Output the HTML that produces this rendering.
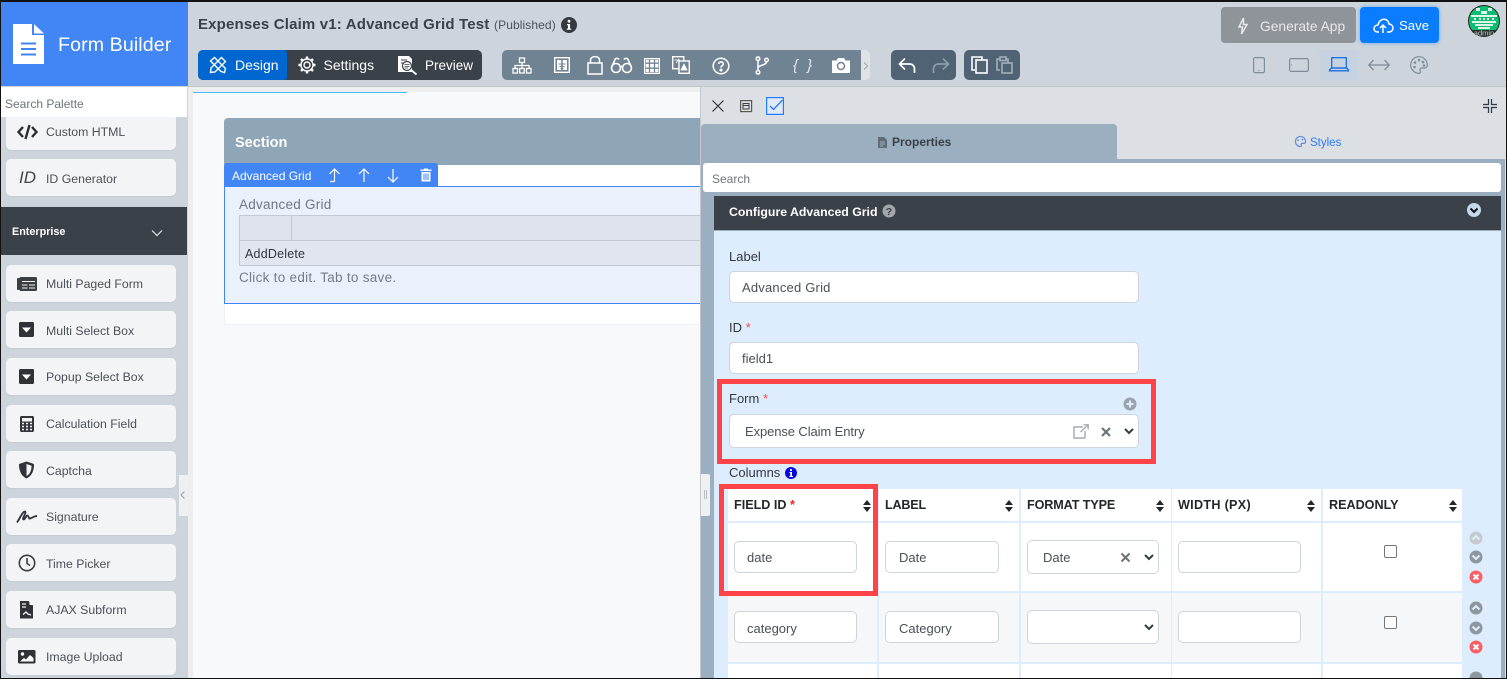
<!DOCTYPE html>
<html><head><meta charset="utf-8"><style>
html,body{margin:0;padding:0;width:1507px;height:679px;overflow:hidden;background:#fff}
body{position:relative;font-family:"Liberation Sans",sans-serif;color:#3a4149}
.b{position:absolute;box-sizing:border-box}
.t{position:absolute;white-space:nowrap;line-height:20px;height:20px}
svg{position:absolute;overflow:visible}
.item{position:absolute;left:6px;width:170px;height:37px;background:#f3f4f6;border-radius:5px;box-shadow:0 1px 1px #c4cad1}
.item span{position:absolute;left:40px;top:9px;font-size:12.3px;line-height:20px;color:#4b5158;white-space:nowrap}
.inp{position:absolute;box-sizing:border-box;background:#fff;border:1px solid #ced4da;border-radius:5px;height:32px;font-size:13px;line-height:32px;color:#495057;white-space:nowrap}
.th{position:absolute;top:495px;font-size:12.6px;font-weight:bold;line-height:20px;color:#23272b;white-space:nowrap}
.cb{position:absolute;width:13px;height:13px;box-sizing:border-box;border:1px solid #767676;border-radius:2px;background:#fff}
.red{position:absolute;box-sizing:border-box;border:5px solid #ff4449}
</style></head><body>

<!-- top bar -->
<div class="b" style="left:188px;top:0;width:1319px;height:87px;background:#cdd4db"></div>
<div class="b" style="left:188px;top:86px;width:1319px;height:1px;background:#c2c6ca"></div>
<!-- sidebar -->
<div class="b" style="left:0;top:0;width:188px;height:679px;background:#cdd4db"></div>
<div class="b" style="left:1px;top:2px;width:187px;height:84px;background:#4285f4"></div>
<svg style="left:13px;top:24px" width="31" height="40" viewBox="0 0 31 40"><path d="M0 0H19V11H31V40H0Z" fill="#fff"/><path d="M21 0L31 9.500H21Z" fill="#fff"/><path d="M8 19.500H23M8 25H23M8 30.500H23" stroke="#4285f4" stroke-width="2"/></svg>
<div class="t" style="left:58px;top:35px;font-size:19.600px;color:#fff;letter-spacing:.1px">Form Builder</div>

<div class="item" style="top:113px;height:37px"><span style="top:9px">Custom HTML</span></div>
<div class="b" style="left:1px;top:87px;width:186px;height:30px;background:#fff"></div>
<div class="t" style="left:5px;top:94px;font-size:12px;color:#6c757d">Search Palette</div>
<svg style="left:16px;top:123px" width="23" height="18" viewBox="0 0 23 18" fill="none" stroke="#2b2f33" stroke-width="2.400"><path d="M7 4L2.500 9L7 14M16 4L20.500 9L16 14M13.500 2L9.500 16"/></svg>
<div class="item" style="top:159px"><span style="top:10px">ID Generator</span></div>
<div class="t" style="left:19px;top:168px;font-size:17px;font-style:italic;color:#444">ID</div>
<div class="b" style="left:1px;top:207px;width:186px;height:48px;background:#3a4149"></div>
<div class="t" style="left:12px;top:222px;font-size:10.800px;font-weight:bold;color:#fff">Enterprise</div>
<svg style="left:151px;top:229px" width="12" height="8" viewBox="0 0 12 8" fill="none" stroke="#e6e6e6" stroke-width="1.200"><path d="M1 1.500L6 6.500L11 1.500"/></svg>

<div class="item" style="top:265px"><span>Multi Paged Form</span></div>
<svg style="left:17px;top:277px" width="20" height="14" viewBox="0 0 20 14"><rect x="0" y="1" width="3" height="12" rx="1" fill="#3a3f44"/><rect x="2.500" y="0" width="17.500" height="14" rx="1.500" fill="#3a3f44"/><path d="M5 4.500H18M5 8H10.500M12 8H18M5 11H10.500M12 11H18" stroke="#f3f4f6" stroke-width="1"/></svg>
<div class="item" style="top:311px"><span style="top:10px">Multi Select Box</span></div>
<svg style="left:19px;top:322px" width="15" height="15" viewBox="0 0 15 15"><rect width="15" height="15" rx="1.500" fill="#2f3338"/><path d="M3 5.500H12L7.500 10.500Z" fill="#fff"/></svg>
<div class="item" style="top:358px"><span>Popup Select Box</span></div>
<svg style="left:19px;top:369px" width="15" height="15" viewBox="0 0 15 15"><rect width="15" height="15" rx="1.500" fill="#2f3338"/><path d="M3 5.500H12L7.500 10.500Z" fill="#fff"/></svg>
<div class="item" style="top:405px"><span>Calculation Field</span></div>
<svg style="left:20px;top:416px" width="14" height="16" viewBox="0 0 14 16"><rect width="14" height="16" rx="1.500" fill="#33373c"/><rect x="2" y="2" width="10" height="3.500" fill="#f3f4f6"/><path d="M2 7.500H4M6 7.500H8M10 7.500H12M2 10.500H4M6 10.500H8M10 10.500H12M2 13.500H4M6 13.500H8M10 13.500H12" stroke="#f3f4f6" stroke-width="1.500"/></svg>
<div class="item" style="top:451px"><span style="top:10px">Captcha</span></div>
<svg style="left:18px;top:461px" width="17" height="18" viewBox="0 0 17 18"><path d="M8.500 .5L16 3C16 9 14.500 14.500 8.500 17.500C2.500 14.500 1 9 1 3Z" fill="#2f3338"/><path d="M8.500 3L13.500 4.700C13.500 9 12.500 12.500 8.500 15Z" fill="#f3f4f6"/></svg>
<div class="item" style="top:498px"><span>Signature</span></div>
<svg style="left:16px;top:510px" width="22" height="14" viewBox="0 0 22 14" fill="none" stroke="#2f3338" stroke-width="1.800"><path d="M1 12.500C4 8 7 1 9 1.500C11 2.500 5.500 9 7.500 9.500C9.500 9.500 10 5 11.500 5.500C13 6 12.500 9 14 8.500C16 8 18 6 21 6"/></svg>
<div class="item" style="top:544px"><span style="top:10px">Time Picker</span></div>
<svg style="left:18px;top:554px" width="18" height="18" viewBox="0 0 18 18" fill="none" stroke="#3a3f44" stroke-width="1.600"><circle cx="9" cy="9" r="7.700"/><path d="M9 4V9.500L12 11.500"/></svg>
<div class="item" style="top:591px"><span>AJAX Subform</span></div>
<svg style="left:20px;top:601px" width="14" height="18" viewBox="0 0 14 18"><path d="M0 0H8.500L13 4.500V17.500H0Z" fill="#2f3338"/><path d="M9.500 .5L13 4H9.500Z" fill="#fff"/><path d="M2 3H6M2 6H6M3 13.500L6 11L8 13L11 14" stroke="#f3f4f6" stroke-width="1.300" fill="none"/></svg>
<div class="item" style="top:638px"><span>Image Upload</span></div>
<svg style="left:18px;top:650px" width="18" height="14" viewBox="0 0 18 14"><rect width="17.500" height="13.500" rx="1.500" fill="#2f3338"/><circle cx="4.500" cy="4" r="1.700" fill="#fff"/><path d="M2 11.500H15.500V8L12 5L8 9.500L6 8Z" fill="#fff"/></svg>
<div class="b" style="left:179px;top:475px;width:9px;height:41px;background:#eef0f2"></div>
<svg style="left:180px;top:491px" width="6" height="8" viewBox="0 0 6 8" fill="none" stroke="#9aa0a6"><path d="M4.500 .5L1 4L4.500 7.500"/></svg>

<!-- header contents -->
<div class="t" style="left:198px;top:15px;font-size:15px;font-weight:bold;color:#3a4149;letter-spacing:.17px">Expenses Claim v1: Advanced Grid Test</div>
<div class="t" style="left:494px;top:15px;font-size:12px;color:#4b5158;letter-spacing:.1px">(Published)</div>
<svg style="left:561px;top:17px" width="16" height="16" viewBox="0 0 16 16"><circle cx="8" cy="8" r="8" fill="#343a40"/><circle cx="8" cy="4.200" r="1.400" fill="#fff"/><path d="M6 7H9V11.500H10.200V12.800H5.800V11.500H7V8.300H6Z" fill="#fff"/></svg>

<div class="b" style="left:198px;top:50px;width:284px;height:30px;background:#3a4149;border-radius:5px"></div>
<div class="b" style="left:198px;top:50px;width:89px;height:30px;background:#0066d0;border-radius:5px 3px 3px 5px"></div>
<svg style="left:209px;top:56px" width="18" height="18" viewBox="0 0 18 18" fill="none" stroke="#fff" stroke-width="1.400"><path d="M2 12L12.500 1.500L16.500 5.500L6 16L1.500 16.500Z"/><path d="M5.500 1.500L16.500 12.500L15.500 16.500L12 15.500L1.500 5L5.500 1.500Z"/></svg>
<div class="t" style="left:235px;top:55px;font-size:14px;color:#fff">Design</div>
<svg style="left:298px;top:56px" width="18" height="18" viewBox="0 0 18 18" fill="none" stroke="#fff"><circle cx="9" cy="9" r="3" stroke-width="1.400"/><circle cx="9" cy="9" r="6" stroke-width="1.400"/><path d="M9 .5V3M9 15V17.500M.5 9H3M15 9H17.500M3 3L4.800 4.800M13.200 13.200L15 15M15 3L13.200 4.800M4.800 13.200L3 15" stroke-width="2.400"/></svg>
<div class="t" style="left:323.500px;top:55px;font-size:14px;color:#fff">Settings</div>
<svg style="left:398px;top:55px" width="20" height="21" viewBox="0 0 20 21"><path d="M0 1H11L14 4V17H0Z" fill="#fff"/><path d="M3 5H9M3 8H6" stroke="#3a4149"/><circle cx="9" cy="11" r="4.500" fill="#fff" stroke="#3a4149" stroke-width="1.200"/><path d="M6.500 9.500H11.500M6.500 11.500H11.500M6.500 13H10" stroke="#3a4149" stroke-width=".8"/><path d="M12.500 14.500L18.500 19.500" stroke="#fff" stroke-width="1.800"/></svg>
<div class="t" style="left:425px;top:56px;font-size:13.500px;color:#fff">Preview</div>

<div class="b" style="left:502px;top:50px;width:368px;height:30px;background:#e0e3e6;border-radius:5px"></div>
<div class="b" style="left:502px;top:50px;width:359px;height:30px;background:#708393;border-radius:5px 0 0 5px"></div>
<svg style="left:863px;top:62px" width="5" height="8" viewBox="0 0 5 8" fill="none" stroke="#9ba3aa"><path d="M1 .5L4.500 4L1 7.500"/></svg>
<!-- toolbar icons -->
<svg style="left:512px;top:57px" width="20" height="17" viewBox="0 0 20 17" fill="none" stroke="#fff" stroke-width="1.300"><rect x="7.500" y="1" width="5" height="4.500"/><rect x="1" y="11.500" width="4.500" height="4.500"/><rect x="7.700" y="11.500" width="4.500" height="4.500"/><rect x="14.500" y="11.500" width="4.500" height="4.500"/><path d="M10 5.500V11.500M3 11.500V8.500H17V11.500"/></svg>
<svg style="left:554px;top:57px" width="16" height="16" viewBox="0 0 16 16"><rect x=".7" y=".7" width="14.600" height="14.600" fill="none" stroke="#fff" stroke-width="1.400"/><rect x="3" y="3" width="10" height="10" fill="#fff"/><path d="M8 3V13" stroke="#708393" stroke-width="1.500"/><path d="M4.500 7H11.500M5.500 9.500H10.500M6.500 11.500H9.500" stroke="#708393" stroke-width="1"/></svg>
<svg style="left:587px;top:55px" width="16" height="20" viewBox="0 0 16 20" fill="none" stroke="#fff" stroke-width="1.500"><rect x="1" y="8" width="14" height="11"/><path d="M3.500 8V5C3.500 .5 12.500 .5 12.500 5V8"/></svg>
<svg style="left:610px;top:57px" width="23" height="17" viewBox="0 0 23 17" fill="none" stroke="#fff" stroke-width="1.600"><circle cx="6" cy="11" r="4.500"/><circle cx="17" cy="11" r="4.500"/><path d="M10 9.500H13M1.800 10L5 2.500C5.500 1 8.500 1 9 2.500M21.200 10L18 2.500C17.500 1 14.500 1 14 2.500"/></svg>
<svg style="left:644px;top:58px" width="16" height="16" viewBox="0 0 16 16"><rect x="0" y="0" width="16" height="16" fill="#fff"/><path d="M1.500 5.200H14.500M1.500 10.200H14.500M5.500 1.500V14.500M10.500 1.500V14.500" stroke="#708393" stroke-width="1.300"/><rect x="1.500" y="1.500" width="13" height="13" fill="none" stroke="#708393" stroke-width=".6"/></svg>
<svg style="left:672px;top:56px" width="18" height="18" viewBox="0 0 18 18"><rect x=".7" y=".7" width="11" height="12" fill="none" stroke="#fff" stroke-width="1.400"/><rect x="7" y="5" width="10.300" height="12.300" fill="#708393" stroke="#fff" stroke-width="1.400"/><path d="M2.500 4H8M4 7L7 3M9 14L12 8L15 14Z" fill="#fff" stroke="#fff" stroke-width=".8"/></svg>
<svg style="left:712px;top:57px" width="18" height="18" viewBox="0 0 18 18" fill="none" stroke="#fff" stroke-width="1.500"><circle cx="9" cy="9" r="7.800"/><path d="M6.700 7C6.800 4.300 11.300 4.300 11.300 7C11.300 8.800 9 8.700 9 10.500" stroke-width="1.600"/><circle cx="9" cy="13" r=".8" fill="#fff"/></svg>
<svg style="left:755px;top:56px" width="14" height="19" viewBox="0 0 14 19" fill="none" stroke="#fff" stroke-width="1.500"><circle cx="3" cy="2.700" r="1.800"/><circle cx="3" cy="16.300" r="1.800"/><circle cx="11.500" cy="4" r="1.800"/><path d="M3 4.500V14.500M3 12C3 9 11.500 9.500 11.500 5.800"/></svg>
<div class="t" style="left:793px;top:56px;font-size:15px;font-style:italic;color:#e4e9ee;letter-spacing:2.500px">{ }</div>
<svg style="left:832px;top:58px" width="18" height="15" viewBox="0 0 18 15"><path d="M0 2.500H4.500L6 0H12L13.500 2.500H18V15H0Z" fill="#fff"/><circle cx="9" cy="8" r="3.500" fill="none" stroke="#708393" stroke-width="1.500"/></svg>

<div class="b" style="left:891px;top:50px;width:65px;height:30px;background:#4f6375;border-radius:5px"></div>
<svg style="left:898px;top:57px" width="18" height="17" viewBox="0 0 18 17" fill="none" stroke="#fff" stroke-width="1.700"><path d="M7 1.500L1.500 7L7 12.500M1.500 7H11.500C14.500 7 16.500 9 16.500 12V16"/></svg>
<svg style="left:932px;top:57px" width="18" height="17" viewBox="0 0 18 17" fill="none" stroke="#8c9ba9" stroke-width="1.700"><path d="M11 1.500L16.500 7L11 12.500M16.500 7H6.500C3.500 7 1.500 9 1.500 12V16"/></svg>
<div class="b" style="left:964px;top:50px;width:56px;height:30px;background:#4f6375;border-radius:5px"></div>
<svg style="left:971px;top:56px" width="17" height="18" viewBox="0 0 17 18" fill="none" stroke="#fff" stroke-width="1.600"><path d="M4 14H1V1H11V4"/><rect x="5" y="4" width="11" height="13"/></svg>
<svg style="left:996px;top:56px" width="17" height="18" viewBox="0 0 17 18" fill="none" stroke="#a3afba" stroke-width="1.600"><path d="M4 14H1V3H4M10 3H12V7"/><rect x="4" y="1" width="6" height="3.500"/><rect x="6" y="7" width="10" height="10"/></svg>

<div class="b" style="left:1221px;top:7px;width:135px;height:36px;background:#8e9499;border-radius:4px"></div>
<svg style="left:1237px;top:17px" width="12" height="18" viewBox="0 0 12 18" fill="none" stroke="#e8e8e8" stroke-width="1.500"><path d="M6.500 1L2 10H5.500L4.500 17L10 7.500H6.500Z"/></svg>
<div class="t" style="left:1260px;top:17px;font-size:13.800px;color:#e6e8ea">Generate App</div>
<div class="b" style="left:1360px;top:7px;width:79px;height:36px;background:#0a7cff;border-radius:4px;box-shadow:0 0 4px #6aa9f0"></div>
<svg style="left:1373px;top:17px" width="21" height="17" viewBox="0 0 21 17" fill="none" stroke="#fff" stroke-width="1.500"><path d="M6 15H4.500C-.5 15 0 8 5 8C6 1 15 0 16 7C21.500 7.500 21 15 16 15H14M10 16V8.500M7 11L10 8L13 11"/></svg>
<div class="t" style="left:1399px;top:16px;font-size:13.200px;color:#fff">Save</div>
<svg style="left:1468px;top:5px" width="32" height="32" viewBox="0 0 32 32"><defs><clipPath id="av"><circle cx="16" cy="16" r="15"/></clipPath></defs><circle cx="16" cy="16" r="16" fill="#222"/><g clip-path="url(#av)"><rect width="32" height="25" y="0" fill="#0ebd74"/><path d="M8 3H12V6H8ZM20 3H24V6H20ZM13 6H19V9H13ZM3 10H29V12H3ZM6 13H8V15H6ZM11 13H13V15H11ZM15 13H17V15H15ZM19 13H21V15H19ZM24 13H26V15H24ZM4 16H28V18H4ZM7 19H25V21H7ZM10 22H22V24H10Z" fill="#dff5ea"/><rect y="25" width="32" height="7" fill="#26302c"/></g><text x="16" y="30.500" font-size="7.500" font-family="Liberation Sans" fill="#c4cdc8" text-anchor="middle">admin</text></svg>

<svg style="left:1253px;top:57px" width="12" height="16" viewBox="0 0 12 16" fill="none" stroke="#7f8d9b" stroke-width="1.200"><rect x=".6" y=".6" width="10.800" height="15" rx="1.500"/><path d="M5.500 13.500H6.500"/></svg>
<svg style="left:1289px;top:58px" width="20" height="14" viewBox="0 0 20 14" fill="none" stroke="#7f8d9b" stroke-width="1.200"><rect x=".6" y=".6" width="18.800" height="12.800" rx="1.500"/><path d="M2.500 6.500V7.500"/></svg>
<div class="b" style="left:1319px;top:50px;width:40px;height:30px;background:#c6d2e0;border-radius:3px"></div>
<svg style="left:1329px;top:57px" width="20" height="15" viewBox="0 0 20 15" fill="none" stroke="#1b6fe0" stroke-width="1.300"><rect x="2.700" y=".7" width="14.600" height="10.300"/><path d="M.5 13.800H19.500V12.800L17.500 11H2.500L.5 12.800Z"/></svg>
<svg style="left:1368px;top:57px" width="22" height="16" viewBox="0 0 22 16" fill="none" stroke="#7f8d9b" stroke-width="1.300"><path d="M1 8H21M5.500 3L.8 8L5.500 13M16.500 3L21.200 8L16.500 13"/></svg>
<svg style="left:1410px;top:56px" width="18" height="18" viewBox="0 0 18 18"><path d="M9 .7C4.200.7.7 4.500.7 9C.7 13.500 4.500 17.300 9 17.300C11 17.300 10.500 15.500 10 14.500C9.500 13 10.500 12 12 12H15C16.500 12 17.300 10.500 17.300 9C17.300 4.500 13.500.7 9 .7Z" fill="none" stroke="#7f8d9b" stroke-width="1.200"/><g fill="#7f8d9b"><circle cx="5" cy="6.500" r="1.300"/><circle cx="9" cy="4" r="1.300"/><circle cx="13" cy="6" r="1.300"/><circle cx="14" cy="9.500" r="1.300"/><circle cx="4.500" cy="11" r="1.300"/></g></svg>

<!-- main -->
<div class="b" style="left:188px;top:87px;width:512px;height:592px;background:#eeeeee"></div>
<div class="b" style="left:193px;top:92px;width:507px;height:587px;background:#f8f9fb"></div>
<div class="b" style="left:193px;top:92px;width:214px;height:1px;background:#45bdf4"></div>
<div class="b" style="left:224px;top:118px;width:476px;height:207px;background:#fff;border-left:1px solid #eef0f2;border-bottom:1px solid #eef0f2"></div>
<div class="b" style="left:224px;top:118px;width:476px;height:47px;background:#8fa5b8;border-radius:4px 0 0 0"></div>
<div class="t" style="left:235px;top:133px;font-size:14.500px;font-weight:bold;color:#fff">Section</div>
<div class="b" style="left:224px;top:186px;width:476px;height:118px;background:#eaf1fd;border:1px solid #4285f4;border-right:none"></div>
<div class="b" style="left:224px;top:163px;width:214px;height:23px;background:#4285f4;border-radius:3px 3px 0 0"></div>
<div class="t" style="left:232px;top:166px;font-size:12px;color:#fff">Advanced Grid</div>
<svg style="left:328px;top:168px" width="13" height="15" viewBox="0 0 13 15" fill="none" stroke="#fff" stroke-width="1.200"><path d="M1.500 6L6.500 1L11.500 6M6.500 1V13.500M2 13.500H6.500"/></svg>
<svg style="left:358px;top:168px" width="12" height="15" viewBox="0 0 12 15" fill="none" stroke="#fff" stroke-width="1.200"><path d="M1 6L6 1L11 6M6 1V14"/></svg>
<svg style="left:387px;top:168px" width="12" height="15" viewBox="0 0 12 15" fill="none" stroke="#fff" stroke-width="1.200"><path d="M1 9L6 14L11 9M6 14V1"/></svg>
<svg style="left:420px;top:168px" width="12" height="14" viewBox="0 0 12 14"><path d="M4 1.500V.5H8V1.500H11.500V3H.5V1.500Z" fill="#fff"/><path d="M1.500 4H10.500V13.500H1.500Z" fill="#fff"/><path d="M4 5.500V12M6 5.500V12M8 5.500V12" stroke="#4285f4"/></svg>
<div class="t" style="left:239px;top:195px;font-size:13.500px;color:#6f7781;letter-spacing:.25px">Advanced Grid</div>
<div class="b" style="left:239px;top:215px;width:461px;height:51px;background:#dee3ee;border:1px solid #c3c9d3;border-right:none"></div>
<div class="b" style="left:291px;top:215px;width:1px;height:26px;background:#c3c9d3"></div>
<div class="b" style="left:239px;top:240px;width:461px;height:1px;background:#c3c9d3"></div>
<div class="b" style="left:240px;top:241px;width:460px;height:24px;background:#e1e5ee"></div>
<div class="t" style="left:245px;top:244px;font-size:12.500px;color:#33383d;letter-spacing:.2px">AddDelete</div>
<div class="t" style="left:239px;top:268px;font-size:13.500px;color:#747c86;letter-spacing:.28px">Click to edit. Tab to save.</div>

<!-- right panel -->
<div class="b" style="left:700px;top:87px;width:807px;height:592px;background:#dcdfe4;border-left:1px solid #c4c7cb"></div>
<svg style="left:712px;top:100px" width="12" height="12" viewBox="0 0 12 12" stroke="#2f3338" stroke-width="1.200"><path d="M.5.5L11.500 11.500M11.500.5L.5 11.500"/></svg>
<svg style="left:740px;top:100px" width="12" height="12" viewBox="0 0 12 12" fill="none"><rect x=".6" y=".6" width="11" height="11" stroke="#5a5a55" stroke-width="1.200"/><path d="M3 3.500H9V9H3ZM3 5.500H9" stroke="#3a3f44"/></svg>
<svg style="left:766px;top:97px" width="18" height="18" viewBox="0 0 18 18" fill="none"><rect x=".6" y=".6" width="16.800" height="16.800" fill="#e1e8f6" stroke="#207dff" stroke-width="1.200"/><path d="M4 9L7.500 12.500L16.500 3" stroke="#207dff" stroke-width="1.300"/></svg>
<svg style="left:1483px;top:99px" width="14" height="14" viewBox="0 0 14 14" fill="none" stroke="#2f3a45" stroke-width="1.200"><path d="M5.500 0V5.500H0M8.500 0V5.500H14M5.500 14V8.500H0M8.500 14V8.500H14"/></svg>

<div class="b" style="left:701px;top:124px;width:416px;height:36px;background:#9bafc0;border-radius:4px 4px 0 0"></div>
<div class="b" style="left:701px;top:159px;width:804px;height:520px;background:#9bafc0"></div>
<svg style="left:878px;top:137px" width="9" height="11" viewBox="0 0 9 11"><path d="M0 0H6L9 3V11H0Z" fill="#5f6b77"/><path d="M2 5H7M2 7H7M2 9H5" stroke="#9bafc0"/></svg>
<div class="t" style="left:892px;top:132px;font-size:12px;font-weight:bold;color:#3a4149">Properties</div>
<svg style="left:1295px;top:136px" width="11" height="11" viewBox="0 0 18 18"><path d="M9 .7C4.200.7.7 4.500.7 9C.7 13.500 4.500 17.300 9 17.300C11 17.300 10.500 15.500 10 14.500C9.500 13 10.500 12 12 12H15C16.500 12 17.300 10.500 17.300 9C17.300 4.500 13.500.7 9 .7Z" fill="none" stroke="#5f8fe0" stroke-width="2"/><circle cx="5" cy="7" r="1.500" fill="#5f8fe0"/><circle cx="12" cy="6" r="1.500" fill="#5f8fe0"/></svg>
<div class="t" style="left:1310px;top:133px;font-size:11.500px;color:#2f7bf5">Styles</div>
<div class="b" style="left:703px;top:163px;width:798px;height:29px;background:#fff;border-radius:3px"></div>
<div class="t" style="left:712px;top:169px;font-size:12px;color:#6c757d">Search</div>
<div class="b" style="left:714px;top:196px;width:787px;height:34px;background:#3a4149"></div>
<div class="t" style="left:729px;top:202px;font-size:12.300px;font-weight:bold;color:#fff">Configure Advanced Grid</div>
<svg style="left:882px;top:204px" width="14" height="14" viewBox="0 0 14 14"><circle cx="7" cy="7" r="6.500" fill="#a3a7ab"/><text x="7" y="10.800" font-size="10.500" font-weight="bold" font-family="Liberation Sans" fill="#3a4149" text-anchor="middle">?</text></svg>
<svg style="left:1467px;top:203px" width="14" height="14" viewBox="0 0 14 14"><circle cx="7" cy="7" r="7" fill="#c4d8ec"/><path d="M3.500 5.500L7 9L10.500 5.500" fill="none" stroke="#111" stroke-width="2"/></svg>
<div class="b" style="left:714px;top:231px;width:787px;height:448px;background:#deedfd"></div>

<div class="t" style="left:729px;top:247px;font-size:13px;color:#33383d">Label</div>
<div class="inp" style="left:729px;top:271px;width:410px;padding-left:12px;letter-spacing:.2px">Advanced Grid</div>
<div class="t" style="left:729px;top:318px;font-size:13px;color:#33383d">ID <span style="color:#ff4449">*</span></div>
<div class="inp" style="left:729px;top:342px;width:410px;padding-left:12px">field1</div>
<div class="t" style="left:729px;top:389px;font-size:13px;color:#33383d">Form <span style="color:#ff4449">*</span></div>
<svg style="left:1123px;top:397px" width="14" height="14" viewBox="0 0 14 14"><circle cx="7" cy="7" r="6.500" fill="#9aa3ac"/><path d="M7 3.500V10.500M3.500 7H10.500" stroke="#deedfd" stroke-width="2"/></svg>
<div class="inp" style="left:729px;top:414px;width:410px;height:34px;padding-left:15px;line-height:33px;letter-spacing:-.1px">Expense Claim Entry</div>
<svg style="left:1073px;top:424px" width="16" height="15" viewBox="0 0 16 15" fill="none" stroke="#a5abb1" stroke-width="1.400"><path d="M10 3H1V14H12V7M7.500 8L15 1M10.500 .8H15.200V5.500"/></svg>
<svg style="left:1101px;top:427px" width="10" height="10" viewBox="0 0 10 10" stroke="#6d7378" stroke-width="2.200"><path d="M1 1L9 9M9 1L1 9"/></svg>
<svg style="left:1124px;top:428px" width="10" height="7" viewBox="0 0 10 7" fill="none" stroke="#343a40" stroke-width="2"><path d="M1 1L5 5L9 1"/></svg>
<div class="t" style="left:729px;top:463px;font-size:13px;color:#33383d">Columns</div>
<svg style="left:785px;top:467px" width="12" height="12" viewBox="0 0 12 12"><circle cx="6" cy="6" r="6" fill="#0505e0"/><circle cx="6" cy="3" r="1.100" fill="#fff"/><path d="M4.500 5H7V9H8V10H4.300V9H5.300V6H4.500Z" fill="#fff"/></svg>

<!-- table -->
<div class="b" style="left:728px;top:489px;width:149px;height:32px;background:#fff"></div>
<div class="b" style="left:879px;top:489px;width:140px;height:32px;background:#fff"></div>
<div class="b" style="left:1021px;top:489px;width:150px;height:32px;background:#fff"></div>
<div class="b" style="left:1172px;top:489px;width:149px;height:32px;background:#fff"></div>
<div class="b" style="left:1323px;top:489px;width:139px;height:32px;background:#fff"></div>
<div class="b" style="left:728px;top:523px;width:149px;height:68px;background:#fff"></div>
<div class="b" style="left:879px;top:523px;width:140px;height:68px;background:#fff"></div>
<div class="b" style="left:1021px;top:523px;width:150px;height:68px;background:#fff"></div>
<div class="b" style="left:1172px;top:523px;width:149px;height:68px;background:#fff"></div>
<div class="b" style="left:1323px;top:523px;width:139px;height:68px;background:#fff"></div>
<div class="b" style="left:728px;top:593px;width:149px;height:69px;background:#f5f7f8"></div>
<div class="b" style="left:879px;top:593px;width:140px;height:69px;background:#f5f7f8"></div>
<div class="b" style="left:1021px;top:593px;width:150px;height:69px;background:#f5f7f8"></div>
<div class="b" style="left:1172px;top:593px;width:149px;height:69px;background:#f5f7f8"></div>
<div class="b" style="left:1323px;top:593px;width:139px;height:69px;background:#f5f7f8"></div>
<div class="b" style="left:728px;top:664px;width:149px;height:15px;background:#fff"></div>
<div class="b" style="left:879px;top:664px;width:140px;height:15px;background:#fff"></div>
<div class="b" style="left:1021px;top:664px;width:150px;height:15px;background:#fff"></div>
<div class="b" style="left:1172px;top:664px;width:149px;height:15px;background:#fff"></div>
<div class="b" style="left:1323px;top:664px;width:139px;height:15px;background:#fff"></div>

<div class="th" style="left:734px">FIELD ID <span style="color:#ff2020">*</span></div>
<div class="th" style="left:885px;letter-spacing:-.2px">LABEL</div>
<div class="th" style="left:1027px;letter-spacing:-.1px">FORMAT TYPE</div>
<div class="th" style="left:1178px;letter-spacing:.3px">WIDTH (PX)</div>
<div class="th" style="left:1329px">READONLY</div>
<svg style="left:863px;top:500px" width="8" height="12" viewBox="0 0 8 12" fill="#23272b"><path d="M4 0L8 5H0ZM4 12L0 7H8Z"/></svg>
<svg style="left:1005px;top:500px" width="8" height="12" viewBox="0 0 8 12" fill="#23272b"><path d="M4 0L8 5H0ZM4 12L0 7H8Z"/></svg>
<svg style="left:1156px;top:500px" width="8" height="12" viewBox="0 0 8 12" fill="#23272b"><path d="M4 0L8 5H0ZM4 12L0 7H8Z"/></svg>
<svg style="left:1307px;top:500px" width="8" height="12" viewBox="0 0 8 12" fill="#23272b"><path d="M4 0L8 5H0ZM4 12L0 7H8Z"/></svg>
<svg style="left:1449px;top:500px" width="8" height="12" viewBox="0 0 8 12" fill="#23272b"><path d="M4 0L8 5H0ZM4 12L0 7H8Z"/></svg>

<div class="inp" style="left:734px;top:541px;width:123px;padding-left:12px">date</div>
<div class="inp" style="left:885px;top:541px;width:114px;padding-left:13px">Date</div>
<div class="inp" style="left:1027px;top:540px;width:132px;height:34px;padding-left:15px;line-height:33px">Date</div>
<svg style="left:1121px;top:553px" width="9" height="9" viewBox="0 0 9 9" stroke="#6d7378" stroke-width="2"><path d="M.5.5L8.500 8.500M8.500.5L.5 8.500"/></svg>
<svg style="left:1144px;top:554px" width="10" height="7" viewBox="0 0 10 7" fill="none" stroke="#343a40" stroke-width="2"><path d="M1 1L5 5L9 1"/></svg>
<div class="inp" style="left:1178px;top:541px;width:123px"></div>
<div class="cb" style="left:1384px;top:545px"></div>

<div class="inp" style="left:734px;top:611px;width:123px;padding-left:12px;line-height:33px">category</div>
<div class="inp" style="left:885px;top:611px;width:114px;padding-left:13px;line-height:33px">Category</div>
<div class="inp" style="left:1027px;top:610px;width:132px;height:34px"></div>
<svg style="left:1144px;top:624px" width="10" height="7" viewBox="0 0 10 7" fill="none" stroke="#343a40" stroke-width="2"><path d="M1 1L5 5L9 1"/></svg>
<div class="inp" style="left:1178px;top:611px;width:123px"></div>
<div class="cb" style="left:1384px;top:616px"></div>

<svg style="left:1469px;top:531px" width="14" height="14" viewBox="0 0 14 14"><circle cx="7" cy="7" r="6.500" fill="#c5cacf"/><path d="M3.500 8.500L7 5L10.500 8.500" fill="none" stroke="#deedfd" stroke-width="2"/></svg>
<svg style="left:1469px;top:550px" width="14" height="14" viewBox="0 0 14 14"><circle cx="7" cy="7" r="6.500" fill="#8e979f"/><path d="M3.500 5.500L7 9L10.500 5.500" fill="none" stroke="#deedfd" stroke-width="2"/></svg>
<svg style="left:1469px;top:570px" width="14" height="14" viewBox="0 0 14 14"><circle cx="7" cy="7" r="6.500" fill="#fb5f66"/><path d="M4.500 4.500L9.500 9.500M9.500 4.500L4.500 9.500" stroke="#fff" stroke-width="2"/></svg>
<svg style="left:1469px;top:601px" width="14" height="14" viewBox="0 0 14 14"><circle cx="7" cy="7" r="6.500" fill="#8e979f"/><path d="M3.500 8.500L7 5L10.500 8.500" fill="none" stroke="#deedfd" stroke-width="2"/></svg>
<svg style="left:1469px;top:621px" width="14" height="14" viewBox="0 0 14 14"><circle cx="7" cy="7" r="6.500" fill="#8e979f"/><path d="M3.500 5.500L7 9L10.500 5.500" fill="none" stroke="#deedfd" stroke-width="2"/></svg>
<svg style="left:1469px;top:640px" width="14" height="14" viewBox="0 0 14 14"><circle cx="7" cy="7" r="6.500" fill="#fb5f66"/><path d="M4.500 4.500L9.500 9.500M9.500 4.500L4.500 9.500" stroke="#fff" stroke-width="2"/></svg>
<svg style="left:1469px;top:671px" width="14" height="14" viewBox="0 0 14 14"><circle cx="7" cy="7" r="6.500" fill="#8e979f"/></svg>

<!-- drag handle -->
<div class="b" style="left:701px;top:474px;width:9px;height:42px;background:#eef0f2;border-radius:0 2px 2px 0"></div>
<div class="b" style="left:704px;top:490px;width:1px;height:9px;background:#b8bec4"></div>
<div class="b" style="left:706px;top:490px;width:1px;height:9px;background:#b8bec4"></div>

<!-- annotations -->
<div class="red" style="left:717px;top:379px;width:439px;height:85px"></div>
<div class="red" style="left:719px;top:484px;width:159px;height:112px"></div>

<!-- screenshot frame -->
<div class="b" style="left:0;top:0;width:1507px;height:679px;border:1px solid #111;border-top-width:2px;pointer-events:none"></div>
</body></html>
